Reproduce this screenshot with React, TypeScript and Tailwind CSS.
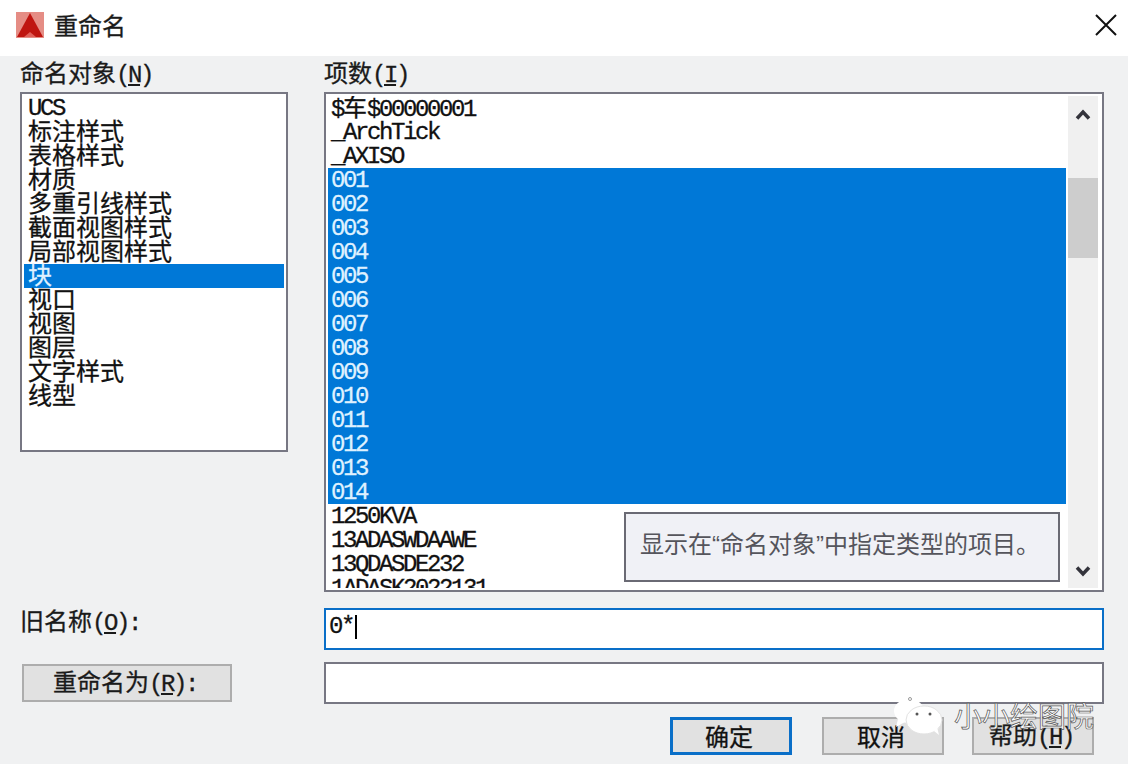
const CJK = "font-['Noto_Sans_CJK_SC','Noto_Sans',sans-serif]";

// Latin runs are a fixed 12px wide and CJK runs 24px, like the dialog's bitmap font
function Mixed({ text }: { text: string }) {
  const runs = text.match(/[\x00-\x7f]+|[^\x00-\x7f]+/g) ?? [];
  return (
    <>
      {runs.map((run, i) =>
        /^[\x00-\x7f]/.test(run) ? (
          <span
            key={i}
            className="font-['Liberation_Mono',monospace] text-[24px] tracking-[-2.4px] [-webkit-text-stroke:0.3px]"
          >
            {run}
          </span>
        ) : (
          <span key={i} className="font-['Noto_Sans_CJK_SC',sans-serif] text-[24px] [-webkit-text-stroke:0.3px]">
            {run}
          </span>
        ),
      )}
    </>
  );
}

function Hotkey({ before, letter, after }: { before: string; letter: string; after: string }) {
  return (
    <span className="whitespace-pre text-[#1a1a1a]">
      <Mixed text={before} />
      <span className="font-['Liberation_Mono',monospace] text-[24px] tracking-[-2.4px] underline [-webkit-text-stroke:0.3px]">
        {letter}
      </span>
      <Mixed text={after} />
    </span>
  );
}

const objectTypes = [
  'UCS',
  '标注样式',
  '表格样式',
  '材质',
  '多重引线样式',
  '截面视图样式',
  '局部视图样式',
  '块',
  '视口',
  '视图',
  '图层',
  '文字样式',
  '线型',
];

const items = [
  '$车$00000001',
  '_ArchTick',
  '_AXISO',
  '001',
  '002',
  '003',
  '004',
  '005',
  '006',
  '007',
  '008',
  '009',
  '010',
  '011',
  '012',
  '013',
  '014',
  '1250KVA',
  '13ADASWDAAWE',
  '13QDASDE232',
  '1ADASK2022131',
];

function Row({ text, selected, pad }: { text: string; selected: boolean; pad: string }) {
  // the two fonts sit at different heights in the line
  const latinOnly = /^[\x00-\x7f]+$/.test(text);
  return (
    <div
      className={`h-6 whitespace-pre ${pad} ${latinOnly ? 'leading-[25px]' : 'leading-[19px]'} ${
        selected ? 'bg-[#0078d7] text-[#dff1ff]' : 'text-[#111111]'
      }`}
    >
      <Mixed text={text} />
    </div>
  );
}

function Chevron({ up }: { up?: boolean }) {
  return (
    <svg width="16" height="12" viewBox="0 0 16 12" className="block">
      <path
        d={up ? 'M2 10.5 L8 4 L14 10.5' : 'M2 1.5 L8 8 L14 1.5'}
        fill="none"
        stroke="#33333b"
        strokeWidth="3.5"
      />
    </svg>
  );
}

function DlgButton({ children, primary, className }: { children: React.ReactNode; primary?: boolean; className: string }) {
  return (
    <button
      className={`flex h-[38px] items-center justify-center bg-[#e1e1e1] pr-1 leading-8 text-[#111111] ${
        primary ? 'border-[3px] border-[#0a6fc8]' : 'border-2 border-[#adadad]'
      } ${className}`}
    >
      {children}
    </button>
  );
}

export default function App() {
  return (
    <div className={`relative flex h-[764px] w-[1128px] flex-col overflow-hidden bg-[#f0f1f2] ${CJK}`}>
      {/* Title bar */}
      <div className="flex h-14 shrink-0 items-center bg-white pl-4 pr-[11px]">
        <svg width="28" height="26" viewBox="0 0 28 26" className="mb-[6px] shrink-0">
          <rect width="28" height="26" fill="#e58d85" />
          <path d="M14 1 L27 25 L1 25 Z" fill="#bf1510" />
          <path d="M8 25 L14 20 L20 25 Z" fill="#e0605a" />
        </svg>
        <span className="ml-[10px] mb-[6px] text-[24px] leading-8 text-[#1a1a1a] [-webkit-text-stroke:0.3px]">
          重命名
        </span>
        <svg width="22" height="22" viewBox="0 0 22 22" className="mb-[6px] ml-auto">
          <path d="M1 1 L21 21 M21 1 L1 21" stroke="#111111" strokeWidth="2" />
        </svg>
      </div>

      <div className="flex flex-1 flex-col px-5 pb-2">
        {/* Lists */}
        <div className="flex gap-9">
          <div className="flex w-[268px] flex-col">
            <div className="h-9 leading-8">
              <Hotkey before="命名对象(" letter="N" after=")" />
            </div>
            <div className="h-[360px] border-2 border-[#777783] bg-white p-0.5">
              {objectTypes.map((t) => (
                <Row key={t} text={t} selected={t === '块'} pad="pl-1" />
              ))}
            </div>
          </div>

          <div className="flex w-[780px] flex-col">
            <div className="h-9 leading-8">
              <Hotkey before="项数(" letter="I" after=")" />
            </div>
            <div className="relative flex h-[500px] gap-0.5 border-2 border-[#777783] bg-white p-0.5">
              <div className="h-full w-[738px] overflow-hidden">
                {items.map((t, i) => (
                  <Row key={t} text={t} selected={i >= 3 && i <= 16} pad="pl-[3px]" />
                ))}
              </div>
              <div className="flex h-full w-[30px] flex-col items-center bg-[#f0f0f0]">
                <div className="flex h-[36px] items-center">
                  <Chevron up />
                </div>
                <div className="mt-[46px] h-[80px] w-full bg-[#cdcdcd]" />
                <div className="mt-auto flex h-[36px] items-center pt-1">
                  <Chevron />
                </div>
              </div>
              {/* Tooltip over the list */}
              <div className="absolute left-[298px] top-[418px] flex h-[70px] w-[436px] items-center border-2 border-[#6a6a74] bg-[#f0f1f6] pb-1 pl-[14px] font-['Liberation_Sans','Noto_Sans_CJK_SC',sans-serif] text-[24px] whitespace-pre text-[#55555c]">
                显示在“命名对象”中指定类型的项目。
              </div>
            </div>
          </div>
        </div>

        {/* Old name */}
        <div className="mt-4 flex items-start gap-9">
          <div className="w-[268px] leading-6">
            <Hotkey before="旧名称(" letter="O" after="):" />
          </div>
          <div className="flex h-[42px] w-[780px] items-center border-2 border-[#0a6fc8] bg-white pb-1 pl-[3px] leading-6 text-[#111111]">
            <Mixed text="0*" />
            <span className="ml-0.5 inline-block h-6 w-0.5 bg-black" />
          </div>
        </div>

        {/* New name */}
        <div className="mt-3 flex items-center gap-9">
          <div className="w-[268px] pl-0.5">
            <DlgButton className="w-[210px]">
              <Hotkey before="重命名为(" letter="R" after="):" />
            </DlgButton>
          </div>
          <div className="h-[42px] w-[780px] border-2 border-[#777783] bg-white" />
        </div>

        {/* Buttons */}
        <div className="mt-[13px] flex justify-end pr-[14px]">
          <DlgButton primary className="w-[122px]">
            <Mixed text="确定" />
          </DlgButton>
          <DlgButton className="ml-[30px] w-[122px]">
            <Mixed text="取消" />
          </DlgButton>
          <DlgButton className="ml-7 w-[122px]">
            <Hotkey before="帮助(" letter="H" after=")" />
          </DlgButton>
        </div>
      </div>

      {/* Watermark */}
      <div className="absolute left-[892px] top-[694px] flex items-center gap-[10px]">
        <svg width="52" height="42" viewBox="0 0 52 42">
          <ellipse cx="17" cy="17" rx="15" ry="12" fill="#ffffff" />
          <path d="M6 25 L4 33 L13 28 Z" fill="#ffffff" />
          <ellipse cx="32" cy="26" rx="18" ry="14" fill="#ffffff" stroke="#e2e2e2" />
          <path d="M42 37 L47 41 L45 33 Z" fill="#ffffff" />
          <circle cx="18" cy="5" r="1.5" fill="#ffffff" stroke="#999999" />
          <circle cx="25" cy="20" r="1.5" fill="#555555" />
          <circle cx="38" cy="20" r="1.5" fill="#555555" />
        </svg>
        <span className="text-[28px] leading-9 whitespace-pre text-white [-webkit-text-stroke:0.7px_#555555]">
          小小绘图院
        </span>
      </div>
    </div>
  );
}
